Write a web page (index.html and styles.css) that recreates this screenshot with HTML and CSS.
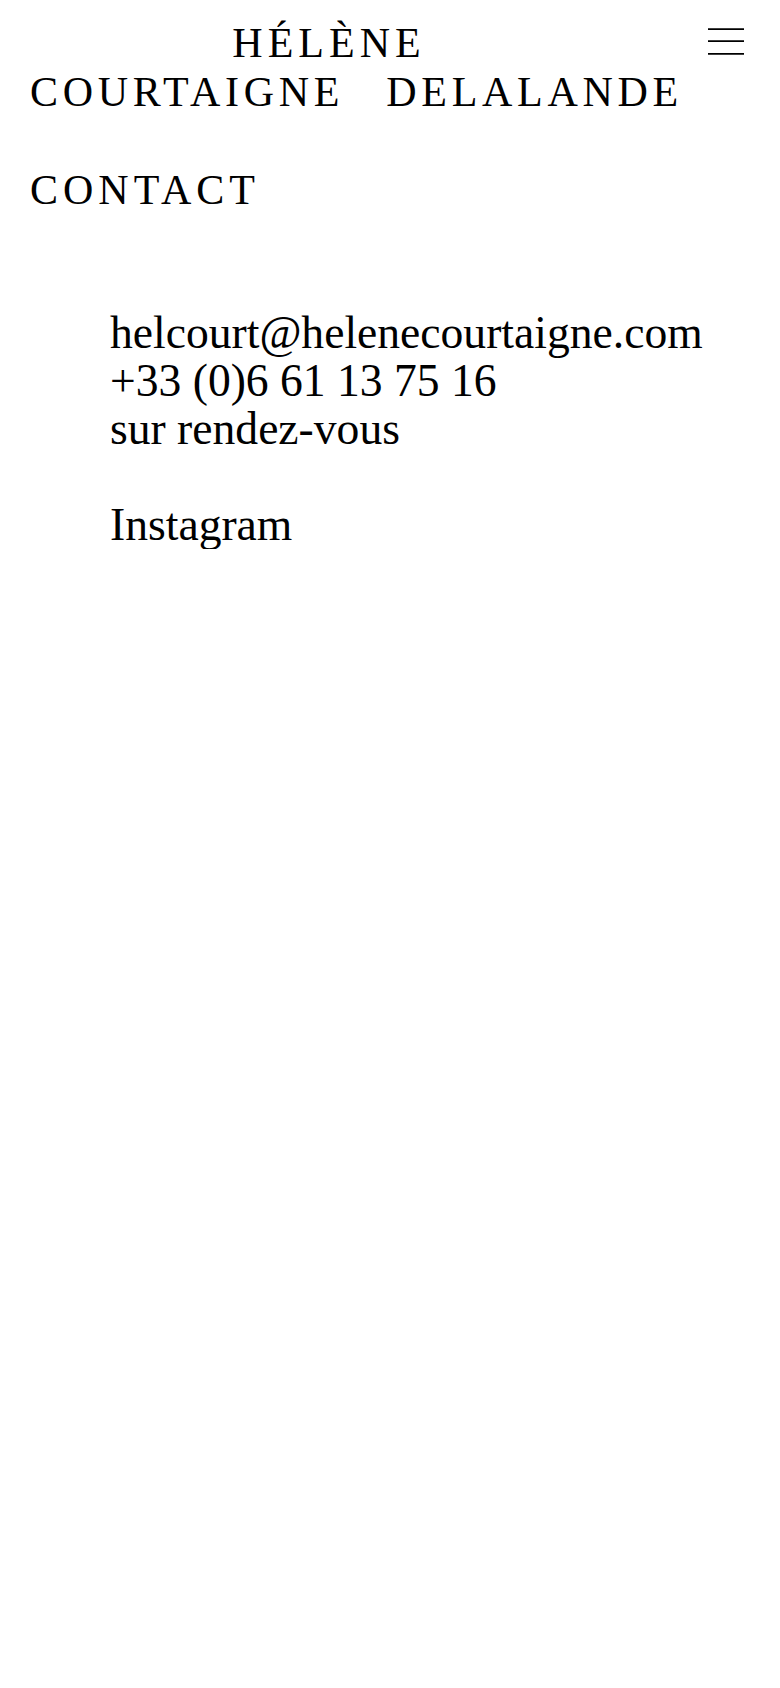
FILE: index.html
```html
<!DOCTYPE html>
<html lang="fr">
<head>
<meta charset="utf-8">
<title>Hélène Courtaigne Delalande — Contact</title>
<link rel="stylesheet" href="styles.css">
</head>
<body>
<header class="site-header">
  <div class="brand">
    <div class="brand-first">HÉLÈNE</div>
    <div class="brand-last">COURTAIGNE DELALANDE</div>
  </div>
  <button class="menu-btn" aria-label="Menu">
    <svg width="36" height="28" viewBox="0 0 36 28" aria-hidden="true">
      <line x1="0" y1="1.2" x2="36" y2="1.2" />
      <line x1="0" y1="13.2" x2="36" y2="13.2" />
      <line x1="0" y1="25.9" x2="36" y2="25.9" />
    </svg>
  </button>
</header>
<main class="page">
  <h1 class="page-title">CONTACT</h1>
  <div class="contact">
    <p class="contact-line">helcourt@helenecourtaigne.com</p>
    <p class="contact-line">+33 (0)6 61 13 75 16</p>
    <p class="contact-line">sur rendez-vous</p>
    <p class="contact-line contact-gap">Instagram</p>
  </div>
</main>
</body>
</html>
```
FILE: styles.css
```css
html, body {
  margin: 0;
  padding: 0;
  background: #ffffff;
  color: #000000;
}

body {
  font-family: "Liberation Serif", "Times New Roman", serif;
  width: 780px;
}

.site-header {
  display: flex;
  align-items: flex-start;
  padding: 19px 36px 0 30px;
}

.brand {
  flex: 1;
  font-size: 42px;
  line-height: 49px;
  letter-spacing: 5px;
}

.brand-first {
  width: 598px;
  text-align: center;
}

.brand-last {
  white-space: nowrap;
  word-spacing: 27px;
  letter-spacing: 4.7px;
}

.menu-btn {
  margin: 9px 0 0 0;
  padding: 0;
  border: 0;
  background: none;
  line-height: 0;
  cursor: pointer;
}

.menu-btn svg line {
  stroke: #000;
  stroke-width: 1.8;
}

.page {
  padding: 0 0 0 30px;
}

.page-title {
  margin: 49px 0 0 0;
  font-weight: normal;
  font-size: 42px;
  line-height: 49px;
  letter-spacing: 5px;
}

.contact {
  margin-top: 94px;
  padding-left: 80px;
  font-size: 45.6px;
  line-height: 48px;
}

.contact-line {
  margin: 0;
}

.contact-gap {
  margin-top: 48px;
}
```
